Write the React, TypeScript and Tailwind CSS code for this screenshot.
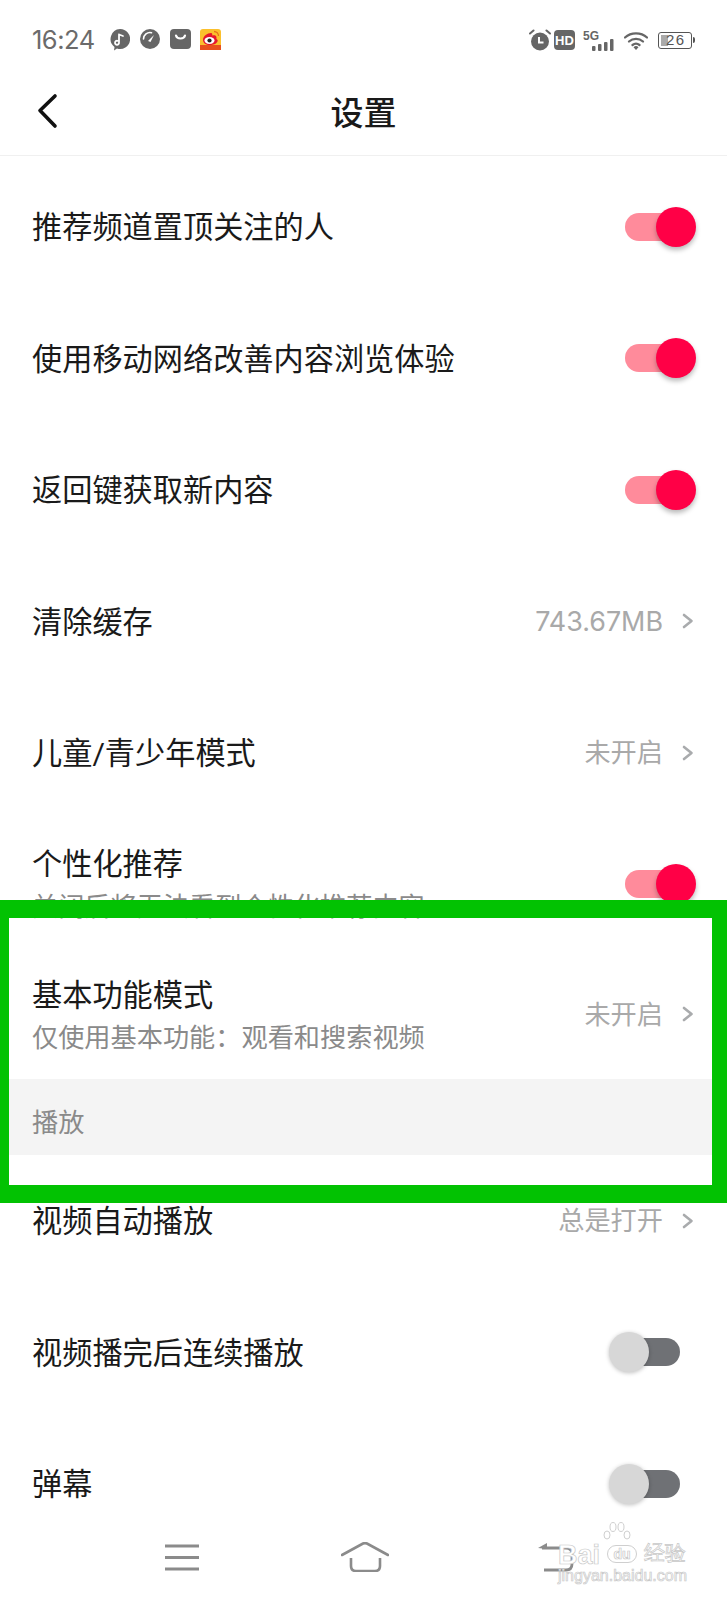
import React from 'react';

const Toggle = ({ on }: { on: boolean }) => (
  <div className={`relative w-[55px] h-[28px] rounded-full ${on ? 'bg-[#ff8b9b]' : 'bg-[#6f7175]'}`}>
    {on ? (
      <div className="absolute left-[31px] top-[-6px] w-[40px] h-[40px] rounded-full bg-[#ff0046] shadow-[0_3px_5px_rgba(0,0,0,0.28)]" />
    ) : (
      <div className="absolute left-[-16px] top-[-6px] w-[40px] h-[40px] rounded-full bg-[#d7d7d7] shadow-[0_1px_4px_rgba(0,0,0,0.25)]" />
    )}
  </div>
);

const Chevron = () => (
  <svg width="12" height="16" viewBox="0 0 12 16" fill="none" className="ml-[19px]">
    <path d="M2 2 L9.5 8 L2 14" stroke="#a9abad" strokeWidth="2.6" strokeLinecap="round" strokeLinejoin="round" />
  </svg>
);

const Row = ({
  title,
  sub,
  value,
  toggle,
  short,
}: {
  title: string;
  sub?: string;
  value?: string;
  toggle?: 'on' | 'off';
  short?: boolean;
}) => (
  <div className={`flex ${short ? 'h-[129px]' : 'h-[131.5px]'} shrink-0 items-center justify-between pl-[32px] ${toggle ? 'pr-[47px]' : 'pr-[33px]'}`}>
    <div className={sub ? 'pt-[4px]' : 'pt-[3px]'}>
      <div className="text-[30.2px] leading-[42px] text-[#1a1a1a]">{title}</div>
      {sub && <div className="text-[26.2px] leading-[42px] text-[#8a8a8a]">{sub}</div>}
    </div>
    {toggle && <Toggle on={toggle === 'on'} />}
    {value && (
      <div className="flex items-center">
        <span className={`font-['Inter','Noto_Sans_CJK_SC',sans-serif] text-[#a9a9a9] ${/\d/.test(value) ? 'text-[26.9px]' : 'text-[26.2px]'}`}>{value}</span>
        <Chevron />
      </div>
    )}
  </div>
);

const StatusLeft = () => (
  <div className="flex items-center">
    <span className="w-[78px] font-['Inter',sans-serif] text-[25.5px] text-[#6b6b6b] tracking-[-0.5px]">16:24</span>
    {/* music bubble */}
    <svg width="20" height="22" viewBox="0 0 20 22">
      <path d="M10 0a10 10 0 1 1-3 19.5L4 21.500l.5-3.600A10 10 0 0 1 10 0z" fill="#666" />
      <path d="M9 5.500v8M9 5.500l4 1.500M9 13.500a2 2 0 1 1-1.500-1.700" stroke="#fff" strokeWidth="1.800" fill="none" strokeLinecap="round" />
    </svg>
    {/* gauge */}
    <svg width="20" height="20" viewBox="0 0 20 20" className="ml-[10px] mb-[2px]">
      <circle cx="10" cy="10" r="10" fill="#666" />
      <path d="M3.500 10a6.500 6.500 0 0 1 8-6.300" stroke="#fff" strokeWidth="1.600" fill="none" strokeLinecap="round" />
      <path d="M8 12 L14 6 L10.500 13z" fill="#fff" />
    </svg>
    {/* bag */}
    <svg width="21" height="20" viewBox="0 0 21 20" className="ml-[10px] mb-[2px]">
      <rect width="21" height="20" rx="4" fill="#666" />
      <path d="M6 6.500c1 4 8 4 9 0" stroke="#fff" strokeWidth="2.200" fill="none" strokeLinecap="round" />
    </svg>
    {/* weibo */}
    <svg width="21" height="21" viewBox="0 0 21 21" className="ml-[9px] mb-[2px]">
      <rect width="21" height="21" rx="3" fill="#fbc02d" />
      <rect y="16" width="21" height="5" fill="#e8501c" />
      <path d="M3 11c0-4 4.500-7 8-7 1.500 0 1.500 1.500 1 2.500 2-.6 4.500-.3 4.500 2 0 .7-.2 1.200 0 1.500 1 .6 1.500 1.500 1 2.500-1 2.500-4.500 3.500-7.500 3.500C6 16 3 14 3 11z" fill="#e6162d" />
      <ellipse cx="9.500" cy="11.500" rx="5" ry="3.400" fill="#fff" />
      <circle cx="9.500" cy="11.500" r="2.100" fill="#222" />
      <path d="M14 2.500a4.500 4.500 0 0 1 4.500 4.500" stroke="#e8701c" strokeWidth="1.300" fill="none" />
    </svg>
  </div>
);

const StatusRight = () => (
  <div className="flex items-center">
    <svg width="22" height="22" viewBox="0 0 22 22">
      <circle cx="11" cy="12.500" r="9" fill="#666" />
      <path d="M1 4.500L4.500 1.500M21 4.500L17.500 1.500" stroke="#666" strokeWidth="2" strokeLinecap="round" />
      <path d="M10 8v5.500h4.500" stroke="#fff" strokeWidth="2" fill="none" />
    </svg>
    <div className="ml-[3px] flex h-[20px] w-[21px] items-center justify-center rounded-[4px] bg-[#666] font-['Liberation_Sans',sans-serif] text-[13px] font-bold leading-none text-white">
      HD
    </div>
    <div className="relative ml-[8px] h-[20px] w-[33px]">
      <span className="absolute left-0 top-[-3px] font-['Liberation_Sans',sans-serif] text-[12px] font-bold text-[#666]">5G</span>
      <svg width="24" height="12" viewBox="0 0 24 12" className="absolute left-[9px] top-[9px]">
        <rect x="0" y="7" width="3.500" height="5" rx="1" fill="#666" />
        <rect x="6" y="5" width="3.500" height="7" rx="1" fill="#666" />
        <rect x="12" y="3" width="3.500" height="9" rx="1" fill="#666" />
        <rect x="18" y="0" width="3.500" height="12" rx="1" fill="#666" />
      </svg>
    </div>
    <svg width="24" height="19" viewBox="0 0 24 19" className="ml-[8px]">
      <path d="M1 6.500C7 1 17 1 23 6.500" stroke="#666" strokeWidth="2.300" fill="none" strokeLinecap="round" />
      <path d="M5 10.500C9 7 15 7 19 10.500" stroke="#666" strokeWidth="2.300" fill="none" strokeLinecap="round" />
      <path d="M8.500 14C10.500 12.500 13.500 12.500 15.500 14" stroke="#666" strokeWidth="2.300" fill="none" strokeLinecap="round" />
      <path d="M12 19l-2.500-2.800a3.500 3.500 0 0 1 5 0z" fill="#666" />
    </svg>
    <div className="relative ml-[10px] flex h-[17px] w-[34px] items-center rounded-[3px] border-[1.5px] border-[#555] pl-[1.500px]">
      <div className="h-[11px] w-[7px] bg-[#aaa]" />
      <span className="absolute left-[7px] top-[-3px] font-['Liberation_Sans',sans-serif] text-[15px] leading-[20px] tracking-[1.5px] text-[#555]">26</span>
    </div>
    <div className="ml-[1px] h-[6px] w-[2px] rounded-r-sm bg-[#555]" />
  </div>
);

const Watermark = () => (
  <div className="absolute left-[558px] top-[1520px] h-[66px] w-[132px] font-['Liberation_Sans',sans-serif] text-white [-webkit-text-stroke:0.7px_#c8c8c8]">
    <svg width="30" height="24" viewBox="0 0 30 24" fill="none" stroke="#cfcfcf" strokeWidth="1" className="absolute left-[44px] top-[2px]">
      <ellipse cx="5" cy="13" rx="3" ry="4" />
      <ellipse cx="11" cy="5" rx="3" ry="4.500" />
      <ellipse cx="19" cy="5" rx="3" ry="4.500" />
      <ellipse cx="25" cy="13" rx="3" ry="4" />
    </svg>
    <span className="absolute left-0 top-[20px] text-[27px] leading-[30px] font-bold">Bai</span>
    <span className="absolute left-[49px] top-[25px] flex h-[18px] w-[30px] items-center justify-center rounded-full border border-[#cfcfcf] text-[14px] leading-[16px] font-bold">du</span>
    <span className="absolute left-[86px] top-[21px] text-[21px] leading-[24px]">经验</span>
    <span className="absolute left-0 top-[47px] whitespace-nowrap text-[16px] leading-[18px]">jingyan.baidu.com</span>
  </div>
);

export default function App() {
  return (
    <div className="relative flex h-[1600px] w-[727px] flex-col overflow-hidden bg-white font-['Roboto','Noto_Sans_CJK_SC',sans-serif]">
      <div className="flex h-[78px] shrink-0 items-center justify-between pl-[32px] pr-[32px] pt-[2px]">
        <StatusLeft />
        <StatusRight />
      </div>

      <div className="relative flex h-[78px] shrink-0 items-center justify-center border-b border-[#f0f0f0] pb-[6px]">
        <svg width="24" height="36" viewBox="0 0 24 36" fill="none" className="absolute left-[35px] top-[15px]">
          <path d="M20 3 L5 17.500 L20 33" stroke="#111" strokeWidth="3.600" strokeLinecap="round" strokeLinejoin="round" />
        </svg>
        <span className="text-[33px] font-medium text-[#1a1a1a]">设置</span>
      </div>

      <div className="flex flex-1 flex-col overflow-hidden pt-[5px]">
        <Row title="推荐频道置顶关注的人" toggle="on" />
        <Row title="使用移动网络改善内容浏览体验" toggle="on" />
        <Row title="返回键获取新内容" toggle="on" />
        <Row title="清除缓存" value="743.67MB" />
        <Row title="儿童/青少年模式" value="未开启" />
        <Row title="个性化推荐" sub="关闭后将无法看到个性化推荐内容" toggle="on" />
        <Row title="基本功能模式" sub="仅使用基本功能：观看和搜索视频" value="未开启" short />
        <div className="flex h-[76px] shrink-0 items-center bg-[#f4f4f4] pl-[32px] pt-[14px] text-[26.2px] text-[#8a8a8a]">播放</div>
        <Row title="视频自动播放" value="总是打开" />
        <Row title="视频播完后连续播放" toggle="off" />
        <Row title="弹幕" toggle="off" />
      </div>

      <div className="flex h-[80px] shrink-0 items-start bg-white pl-[165px] pt-[22px]">
        <svg width="35" height="30" viewBox="0 0 35 30" className="mt-[1px]">
          <path d="M0 3H34M0 14.500H34M0 26H34" stroke="#8b8b8b" strokeWidth="2.800" />
        </svg>
        <svg width="48" height="30" viewBox="0 0 48 30" fill="none" className="ml-[141px]">
          <path d="M1 13 L22 1.500 Q24 .8 26 1.500 L47 13" stroke="#8b8b8b" strokeWidth="2.600" strokeLinecap="round" />
          <path d="M10 16V24Q10 29 15 29H34Q39 29 39 24V16" stroke="#8b8b8b" strokeWidth="2.600" />
        </svg>
        <svg width="36" height="30" viewBox="0 0 36 30" fill="none" className="ml-[149px] mt-[1px]">
          <path d="M4 5H28Q34 5 34 11V21Q34 27 28 27H6" stroke="#8b8b8b" strokeWidth="2.800" />
          <path d="M0 5L9 0V6z" fill="#8b8b8b" />
        </svg>
      </div>

      <Watermark />

      {/* green annotation frame */}
      <div className="pointer-events-none absolute left-0 top-[900px] h-[303px] w-full border-y-[18px] border-l-[9px] border-r-[15px] border-[#02c202]" />
    </div>
  );
}
